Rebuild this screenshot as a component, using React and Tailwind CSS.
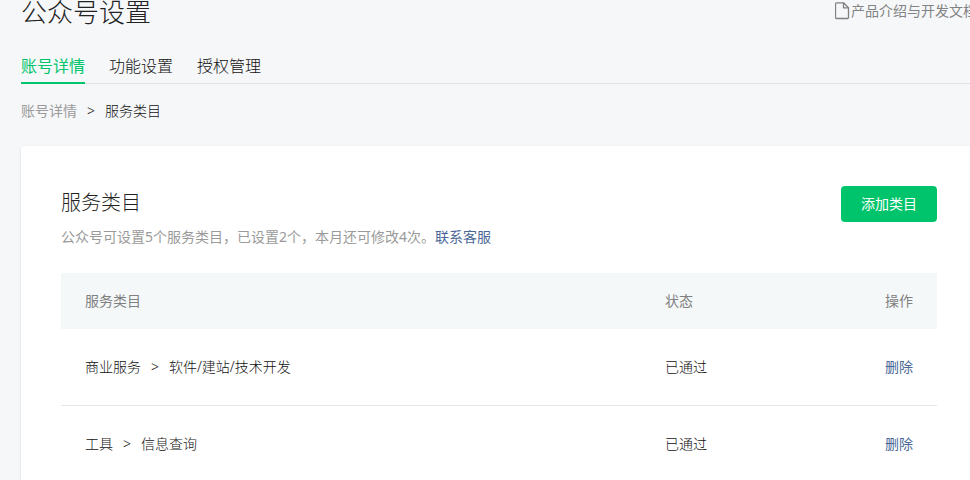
const tabs = [
  { name: '账号详情', active: true },
  { name: '功能设置', active: false },
  { name: '授权管理', active: false },
];

const categories = [
  { id: 1, parent: '商业服务', child: '软件/建站/技术开发', status: '已通过' },
  { id: 2, parent: '工具', child: '信息查询', status: '已通过' },
];

export default function App() {
  return (
    <div className="h-screen overflow-hidden bg-[#f6f7f9] pl-[21px] font-['Noto_Sans','Noto_Sans_CJK_SC',sans-serif] text-sm font-light text-[#111]">
      {/* the content column runs a little past the right edge */}
      <div className="-mr-[7px]">
        <header className="flex h-6 items-start justify-between">
          <h1 className="text-[26px] leading-6 text-[#222]">公众号设置</h1>
          <a href="#docs" className="flex shrink-0 items-center gap-px whitespace-nowrap leading-[22px] font-normal text-[#828384]">
            <DocIcon />
            产品介绍与开发文档
          </a>
        </header>

        <nav className="mt-6 flex gap-6 border-b border-[#dfe1e4] text-base">
          {tabs.map((tab) => (
            <a
              key={tab.name}
              href="#tab"
              className={
                tab.active
                  ? '-mb-px h-9 border-b-2 border-[#00c46c] pt-[6px] leading-6 font-normal text-[#00c46c]'
                  : 'pt-[6px] leading-6'
              }
            >
              {tab.name}
            </a>
          ))}
        </nav>

        <Crumbs>
          <a href="#detail" className="font-normal text-[#9a9a9a]">账号详情</a>
          <span>&gt;</span>
          <span>服务类目</span>
        </Crumbs>

        <main className="mt-[25px] rounded bg-white p-10 shadow-[0_1px_3px_rgba(0,0,0,0.12)]">
          <div className="flex items-start justify-between">
            <div>
              <h2 className="text-xl leading-[34px] text-[#222]">服务类目</h2>
              <p className="mt-[7px] leading-5 font-normal text-[#9a9a9a]">
                公众号可设置5个服务类目，已设置2个，本月还可修改4次。
                <a href="#service" className="text-[#4a6797]">联系客服</a>
              </p>
            </div>
            <button type="button" className="h-9 w-24 rounded bg-[#00c46c] font-normal text-white">
              添加类目
            </button>
          </div>

          <table className="mt-[26px] w-full text-left">
            <thead className="bg-[#f4f8f9] text-[#808080]">
              <tr className="h-14">
                <th className="px-6 font-normal">服务类目</th>
                <th className="w-[195px] font-normal">状态</th>
                <th className="w-[77px] px-6 text-right font-normal whitespace-nowrap">操作</th>
              </tr>
            </thead>
            <tbody>
              {categories.map((item) => (
                <tr key={item.id} className="h-[77px] border-b border-[#e4e6e8] first:h-[76px] last:border-b-0">
                  <td className="px-6">
                    <Crumbs>
                      <span>{item.parent}</span>
                      <span>&gt;</span>
                      <span>{item.child}</span>
                    </Crumbs>
                  </td>
                  <td>{item.status}</td>
                  <td className="px-6 text-right">
                    <button type="button" className="font-normal text-[#4a6797]">删除</button>
                  </td>
                </tr>
              ))}
            </tbody>
          </table>
        </main>
      </div>
    </div>
  );
}

function Crumbs({ children }) {
  return <div className="flex gap-[10px] leading-5 [nav+&]:mt-[17px]">{children}</div>;
}

function DocIcon() {
  return (
    <svg width="15" height="18" viewBox="0 0 15 18" fill="none" stroke="#808080" strokeWidth="1.3" strokeLinejoin="round">
      <path d="M1.5.8h7l5 5v9.7a1 1 0 0 1-1 1h-11a1 1 0 0 1-1-1V1.8a1 1 0 0 1 1-1z" />
      <path d="M8.5.8v5h5" />
    </svg>
  );
}
